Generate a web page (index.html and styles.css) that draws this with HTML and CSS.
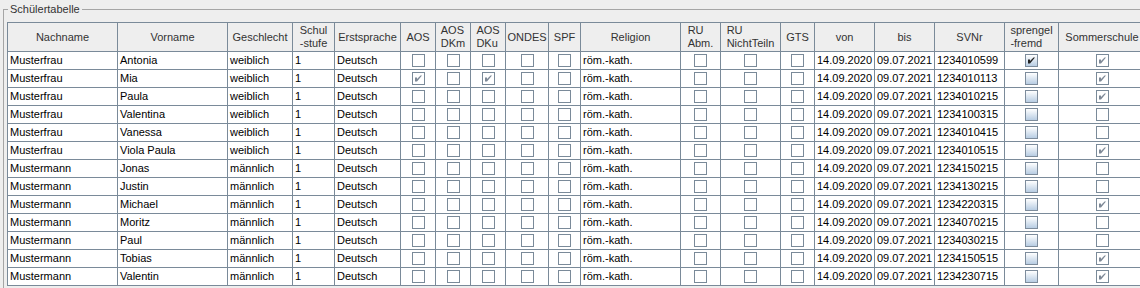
FILE: index.html
```html
<!DOCTYPE html>
<html lang="de">
<head>
<meta charset="utf-8">
<title>Schülertabelle</title>
<link rel="stylesheet" href="styles.css">
</head>
<body>
<fieldset class="panel">
  <legend class="panel-title">Schülertabelle</legend>
  <table class="grid">
    <colgroup>
      <col class="w110"><col class="w110"><col class="w65"><col class="w42"><col class="w66">
      <col class="w35"><col class="w35"><col class="w35"><col class="w43"><col class="w32">
      <col class="w100"><col class="w40"><col class="w60"><col class="w34"><col class="w60">
      <col class="w60"><col class="w70"><col class="w54"><col class="w87">
    </colgroup>
    <thead>
      <tr>
        <th>Nachname</th><th>Vorname</th><th>Geschlecht</th>
        <th><span class="two">Schul<br>-stufe</span></th>
        <th>Erstsprache</th><th>AOS</th>
        <th><span class="two">AOS<br>DKm</span></th>
        <th><span class="two">AOS<br>DKu</span></th>
        <th>ONDES</th><th>SPF</th><th>Religion</th>
        <th><span class="two">RU<br>Abm.</span></th>
        <th><span class="two">RU<br>NichtTeiln</span></th>
        <th>GTS</th><th>von</th><th>bis</th><th>SVNr</th>
        <th><span class="two">sprengel<br>-fremd</span></th>
        <th>Sommerschule</th>
      </tr>
    </thead>
    <tbody>
      <tr><td>Musterfrau</td><td>Antonia</td><td>weiblich</td><td>1</td><td>Deutsch</td>
        <td class="c"><span class="cb"></span></td><td class="c"><span class="cb"></span></td><td class="c"><span class="cb"></span></td><td class="c"><span class="cb"></span></td><td class="c"><span class="cb"></span></td>
        <td>röm.-kath.</td><td class="c"><span class="cb"></span></td><td class="c"><span class="cb"></span></td><td class="c"><span class="cb"></span></td>
        <td>14.09.2020</td><td>09.07.2021</td><td>1234010599</td>
        <td class="c"><span class="cb fancy"><svg class="tick dark" viewBox="0 0 11 11"><path d="M2 4.5h2v1.5l3.5-3.5h1.5L4 8.5H2z"/></svg></span></td>
        <td class="c"><span class="cb"><svg class="tick" viewBox="0 0 11 11"><path d="M2 4.5h2v1.5l3.5-3.5h1.5L4 8.5H2z"/></svg></span></td></tr>
      <tr><td>Musterfrau</td><td>Mia</td><td>weiblich</td><td>1</td><td>Deutsch</td>
        <td class="c"><span class="cb"><svg class="tick" viewBox="0 0 11 11"><path d="M2 4.5h2v1.5l3.5-3.5h1.5L4 8.5H2z"/></svg></span></td><td class="c"><span class="cb"></span></td><td class="c"><span class="cb"><svg class="tick" viewBox="0 0 11 11"><path d="M2 4.5h2v1.5l3.5-3.5h1.5L4 8.5H2z"/></svg></span></td><td class="c"><span class="cb"></span></td><td class="c"><span class="cb"></span></td>
        <td>röm.-kath.</td><td class="c"><span class="cb"></span></td><td class="c"><span class="cb"></span></td><td class="c"><span class="cb"></span></td>
        <td>14.09.2020</td><td>09.07.2021</td><td>1234010113</td>
        <td class="c"><span class="cb fancy"></span></td>
        <td class="c"><span class="cb"><svg class="tick" viewBox="0 0 11 11"><path d="M2 4.5h2v1.5l3.5-3.5h1.5L4 8.5H2z"/></svg></span></td></tr>
      <tr><td>Musterfrau</td><td>Paula</td><td>weiblich</td><td>1</td><td>Deutsch</td>
        <td class="c"><span class="cb"></span></td><td class="c"><span class="cb"></span></td><td class="c"><span class="cb"></span></td><td class="c"><span class="cb"></span></td><td class="c"><span class="cb"></span></td>
        <td>röm.-kath.</td><td class="c"><span class="cb"></span></td><td class="c"><span class="cb"></span></td><td class="c"><span class="cb"></span></td>
        <td>14.09.2020</td><td>09.07.2021</td><td>1234010215</td>
        <td class="c"><span class="cb fancy"></span></td>
        <td class="c"><span class="cb"><svg class="tick" viewBox="0 0 11 11"><path d="M2 4.5h2v1.5l3.5-3.5h1.5L4 8.5H2z"/></svg></span></td></tr>
      <tr><td>Musterfrau</td><td>Valentina</td><td>weiblich</td><td>1</td><td>Deutsch</td>
        <td class="c"><span class="cb"></span></td><td class="c"><span class="cb"></span></td><td class="c"><span class="cb"></span></td><td class="c"><span class="cb"></span></td><td class="c"><span class="cb"></span></td>
        <td>röm.-kath.</td><td class="c"><span class="cb"></span></td><td class="c"><span class="cb"></span></td><td class="c"><span class="cb"></span></td>
        <td>14.09.2020</td><td>09.07.2021</td><td>1234100315</td>
        <td class="c"><span class="cb fancy"></span></td>
        <td class="c"><span class="cb"></span></td></tr>
      <tr><td>Musterfrau</td><td>Vanessa</td><td>weiblich</td><td>1</td><td>Deutsch</td>
        <td class="c"><span class="cb"></span></td><td class="c"><span class="cb"></span></td><td class="c"><span class="cb"></span></td><td class="c"><span class="cb"></span></td><td class="c"><span class="cb"></span></td>
        <td>röm.-kath.</td><td class="c"><span class="cb"></span></td><td class="c"><span class="cb"></span></td><td class="c"><span class="cb"></span></td>
        <td>14.09.2020</td><td>09.07.2021</td><td>1234010415</td>
        <td class="c"><span class="cb fancy"></span></td>
        <td class="c"><span class="cb"></span></td></tr>
      <tr><td>Musterfrau</td><td>Viola Paula</td><td>weiblich</td><td>1</td><td>Deutsch</td>
        <td class="c"><span class="cb"></span></td><td class="c"><span class="cb"></span></td><td class="c"><span class="cb"></span></td><td class="c"><span class="cb"></span></td><td class="c"><span class="cb"></span></td>
        <td>röm.-kath.</td><td class="c"><span class="cb"></span></td><td class="c"><span class="cb"></span></td><td class="c"><span class="cb"></span></td>
        <td>14.09.2020</td><td>09.07.2021</td><td>1234010515</td>
        <td class="c"><span class="cb fancy"></span></td>
        <td class="c"><span class="cb"><svg class="tick" viewBox="0 0 11 11"><path d="M2 4.5h2v1.5l3.5-3.5h1.5L4 8.5H2z"/></svg></span></td></tr>
      <tr><td>Mustermann</td><td>Jonas</td><td>männlich</td><td>1</td><td>Deutsch</td>
        <td class="c"><span class="cb"></span></td><td class="c"><span class="cb"></span></td><td class="c"><span class="cb"></span></td><td class="c"><span class="cb"></span></td><td class="c"><span class="cb"></span></td>
        <td>röm.-kath.</td><td class="c"><span class="cb"></span></td><td class="c"><span class="cb"></span></td><td class="c"><span class="cb"></span></td>
        <td>14.09.2020</td><td>09.07.2021</td><td>1234150215</td>
        <td class="c"><span class="cb fancy"></span></td>
        <td class="c"><span class="cb"></span></td></tr>
      <tr><td>Mustermann</td><td>Justin</td><td>männlich</td><td>1</td><td>Deutsch</td>
        <td class="c"><span class="cb"></span></td><td class="c"><span class="cb"></span></td><td class="c"><span class="cb"></span></td><td class="c"><span class="cb"></span></td><td class="c"><span class="cb"></span></td>
        <td>röm.-kath.</td><td class="c"><span class="cb"></span></td><td class="c"><span class="cb"></span></td><td class="c"><span class="cb"></span></td>
        <td>14.09.2020</td><td>09.07.2021</td><td>1234130215</td>
        <td class="c"><span class="cb fancy"></span></td>
        <td class="c"><span class="cb"></span></td></tr>
      <tr><td>Mustermann</td><td>Michael</td><td>männlich</td><td>1</td><td>Deutsch</td>
        <td class="c"><span class="cb"></span></td><td class="c"><span class="cb"></span></td><td class="c"><span class="cb"></span></td><td class="c"><span class="cb"></span></td><td class="c"><span class="cb"></span></td>
        <td>röm.-kath.</td><td class="c"><span class="cb"></span></td><td class="c"><span class="cb"></span></td><td class="c"><span class="cb"></span></td>
        <td>14.09.2020</td><td>09.07.2021</td><td>1234220315</td>
        <td class="c"><span class="cb fancy"></span></td>
        <td class="c"><span class="cb"><svg class="tick" viewBox="0 0 11 11"><path d="M2 4.5h2v1.5l3.5-3.5h1.5L4 8.5H2z"/></svg></span></td></tr>
      <tr><td>Mustermann</td><td>Moritz</td><td>männlich</td><td>1</td><td>Deutsch</td>
        <td class="c"><span class="cb"></span></td><td class="c"><span class="cb"></span></td><td class="c"><span class="cb"></span></td><td class="c"><span class="cb"></span></td><td class="c"><span class="cb"></span></td>
        <td>röm.-kath.</td><td class="c"><span class="cb"></span></td><td class="c"><span class="cb"></span></td><td class="c"><span class="cb"></span></td>
        <td>14.09.2020</td><td>09.07.2021</td><td>1234070215</td>
        <td class="c"><span class="cb fancy"></span></td>
        <td class="c"><span class="cb"></span></td></tr>
      <tr><td>Mustermann</td><td>Paul</td><td>männlich</td><td>1</td><td>Deutsch</td>
        <td class="c"><span class="cb"></span></td><td class="c"><span class="cb"></span></td><td class="c"><span class="cb"></span></td><td class="c"><span class="cb"></span></td><td class="c"><span class="cb"></span></td>
        <td>röm.-kath.</td><td class="c"><span class="cb"></span></td><td class="c"><span class="cb"></span></td><td class="c"><span class="cb"></span></td>
        <td>14.09.2020</td><td>09.07.2021</td><td>1234030215</td>
        <td class="c"><span class="cb fancy"></span></td>
        <td class="c"><span class="cb"></span></td></tr>
      <tr><td>Mustermann</td><td>Tobias</td><td>männlich</td><td>1</td><td>Deutsch</td>
        <td class="c"><span class="cb"></span></td><td class="c"><span class="cb"></span></td><td class="c"><span class="cb"></span></td><td class="c"><span class="cb"></span></td><td class="c"><span class="cb"></span></td>
        <td>röm.-kath.</td><td class="c"><span class="cb"></span></td><td class="c"><span class="cb"></span></td><td class="c"><span class="cb"></span></td>
        <td>14.09.2020</td><td>09.07.2021</td><td>1234150515</td>
        <td class="c"><span class="cb fancy"></span></td>
        <td class="c"><span class="cb"><svg class="tick" viewBox="0 0 11 11"><path d="M2 4.5h2v1.5l3.5-3.5h1.5L4 8.5H2z"/></svg></span></td></tr>
      <tr><td>Mustermann</td><td>Valentin</td><td>männlich</td><td>1</td><td>Deutsch</td>
        <td class="c"><span class="cb"></span></td><td class="c"><span class="cb"></span></td><td class="c"><span class="cb"></span></td><td class="c"><span class="cb"></span></td><td class="c"><span class="cb"></span></td>
        <td>röm.-kath.</td><td class="c"><span class="cb"></span></td><td class="c"><span class="cb"></span></td><td class="c"><span class="cb"></span></td>
        <td>14.09.2020</td><td>09.07.2021</td><td>1234230715</td>
        <td class="c"><span class="cb fancy"></span></td>
        <td class="c"><span class="cb"><svg class="tick" viewBox="0 0 11 11"><path d="M2 4.5h2v1.5l3.5-3.5h1.5L4 8.5H2z"/></svg></span></td></tr>
    </tbody>
  </table>
</fieldset>
</body>
</html>
```

FILE: styles.css
```css
html, body {
  margin: 0;
  padding: 0;
  overflow: hidden;
  background: #eeeeee;
  font-family: "Liberation Sans", Arial, sans-serif;
  font-size: 11px;
  color: #000;
}

.panel {
  margin: 2px 0 0 3px;
  padding: 6px 0 4px 3px;
  border: 1px solid #a5a5a5;
  border-right: none;
  min-width: 0;
  width: 1200px;
}

.panel-title {
  margin-left: 1px;
  padding: 0 2px;
  line-height: 14px;
  color: #333;
}

.grid {
  border-collapse: separate;
  border-spacing: 0;
  table-layout: fixed;
  width: 1139px;
  border-left: 1px solid #7a8a99;
  border-top: 1px solid #7a8a99;
  background: #fff;
}

.w110 { width: 110px; }
.w100 { width: 100px; }
.w87 { width: 87px; }
.w70 { width: 70px; }
.w66 { width: 66px; }
.w65 { width: 65px; }
.w60 { width: 60px; }
.w54 { width: 54px; }
.w43 { width: 43px; }
.w42 { width: 42px; }
.w40 { width: 40px; }
.w35 { width: 35px; }
.w34 { width: 34px; }
.w32 { width: 32px; }

.grid th,
.grid td {
  border-right: 1px solid #7a8a99;
  border-bottom: 1px solid #7a8a99;
  padding: 0;
  white-space: nowrap;
  overflow: hidden;
}

.grid th {
  height: 28px;
  background: #eeeeee;
  font-weight: normal;
  color: #333;
  text-align: center;
  vertical-align: middle;
  line-height: 13px;
}

.two {
  display: inline-block;
  text-align: left;
}

.grid td {
  height: 17px;
  padding-left: 2px;
  line-height: 17px;
  vertical-align: middle;
}

.grid td.c {
  padding: 0;
  text-align: center;
}

.cb {
  display: inline-flex;
  width: 13px;
  height: 13px;
  box-sizing: border-box;
  border: 1px solid #7a8a99;
  background: #fff;
  vertical-align: middle;
  position: relative;
  top: -1px;
}

.cb.fancy {
  background: linear-gradient(#ffffff, #b8cde3);
  border-color: #7d8c9c;
}

.tick {
  width: 11px;
  height: 11px;
  margin: 0;
  display: block;
}

.tick path {
  fill: #7d8896;
}

.tick.dark path {
  fill: #222;
}
```
